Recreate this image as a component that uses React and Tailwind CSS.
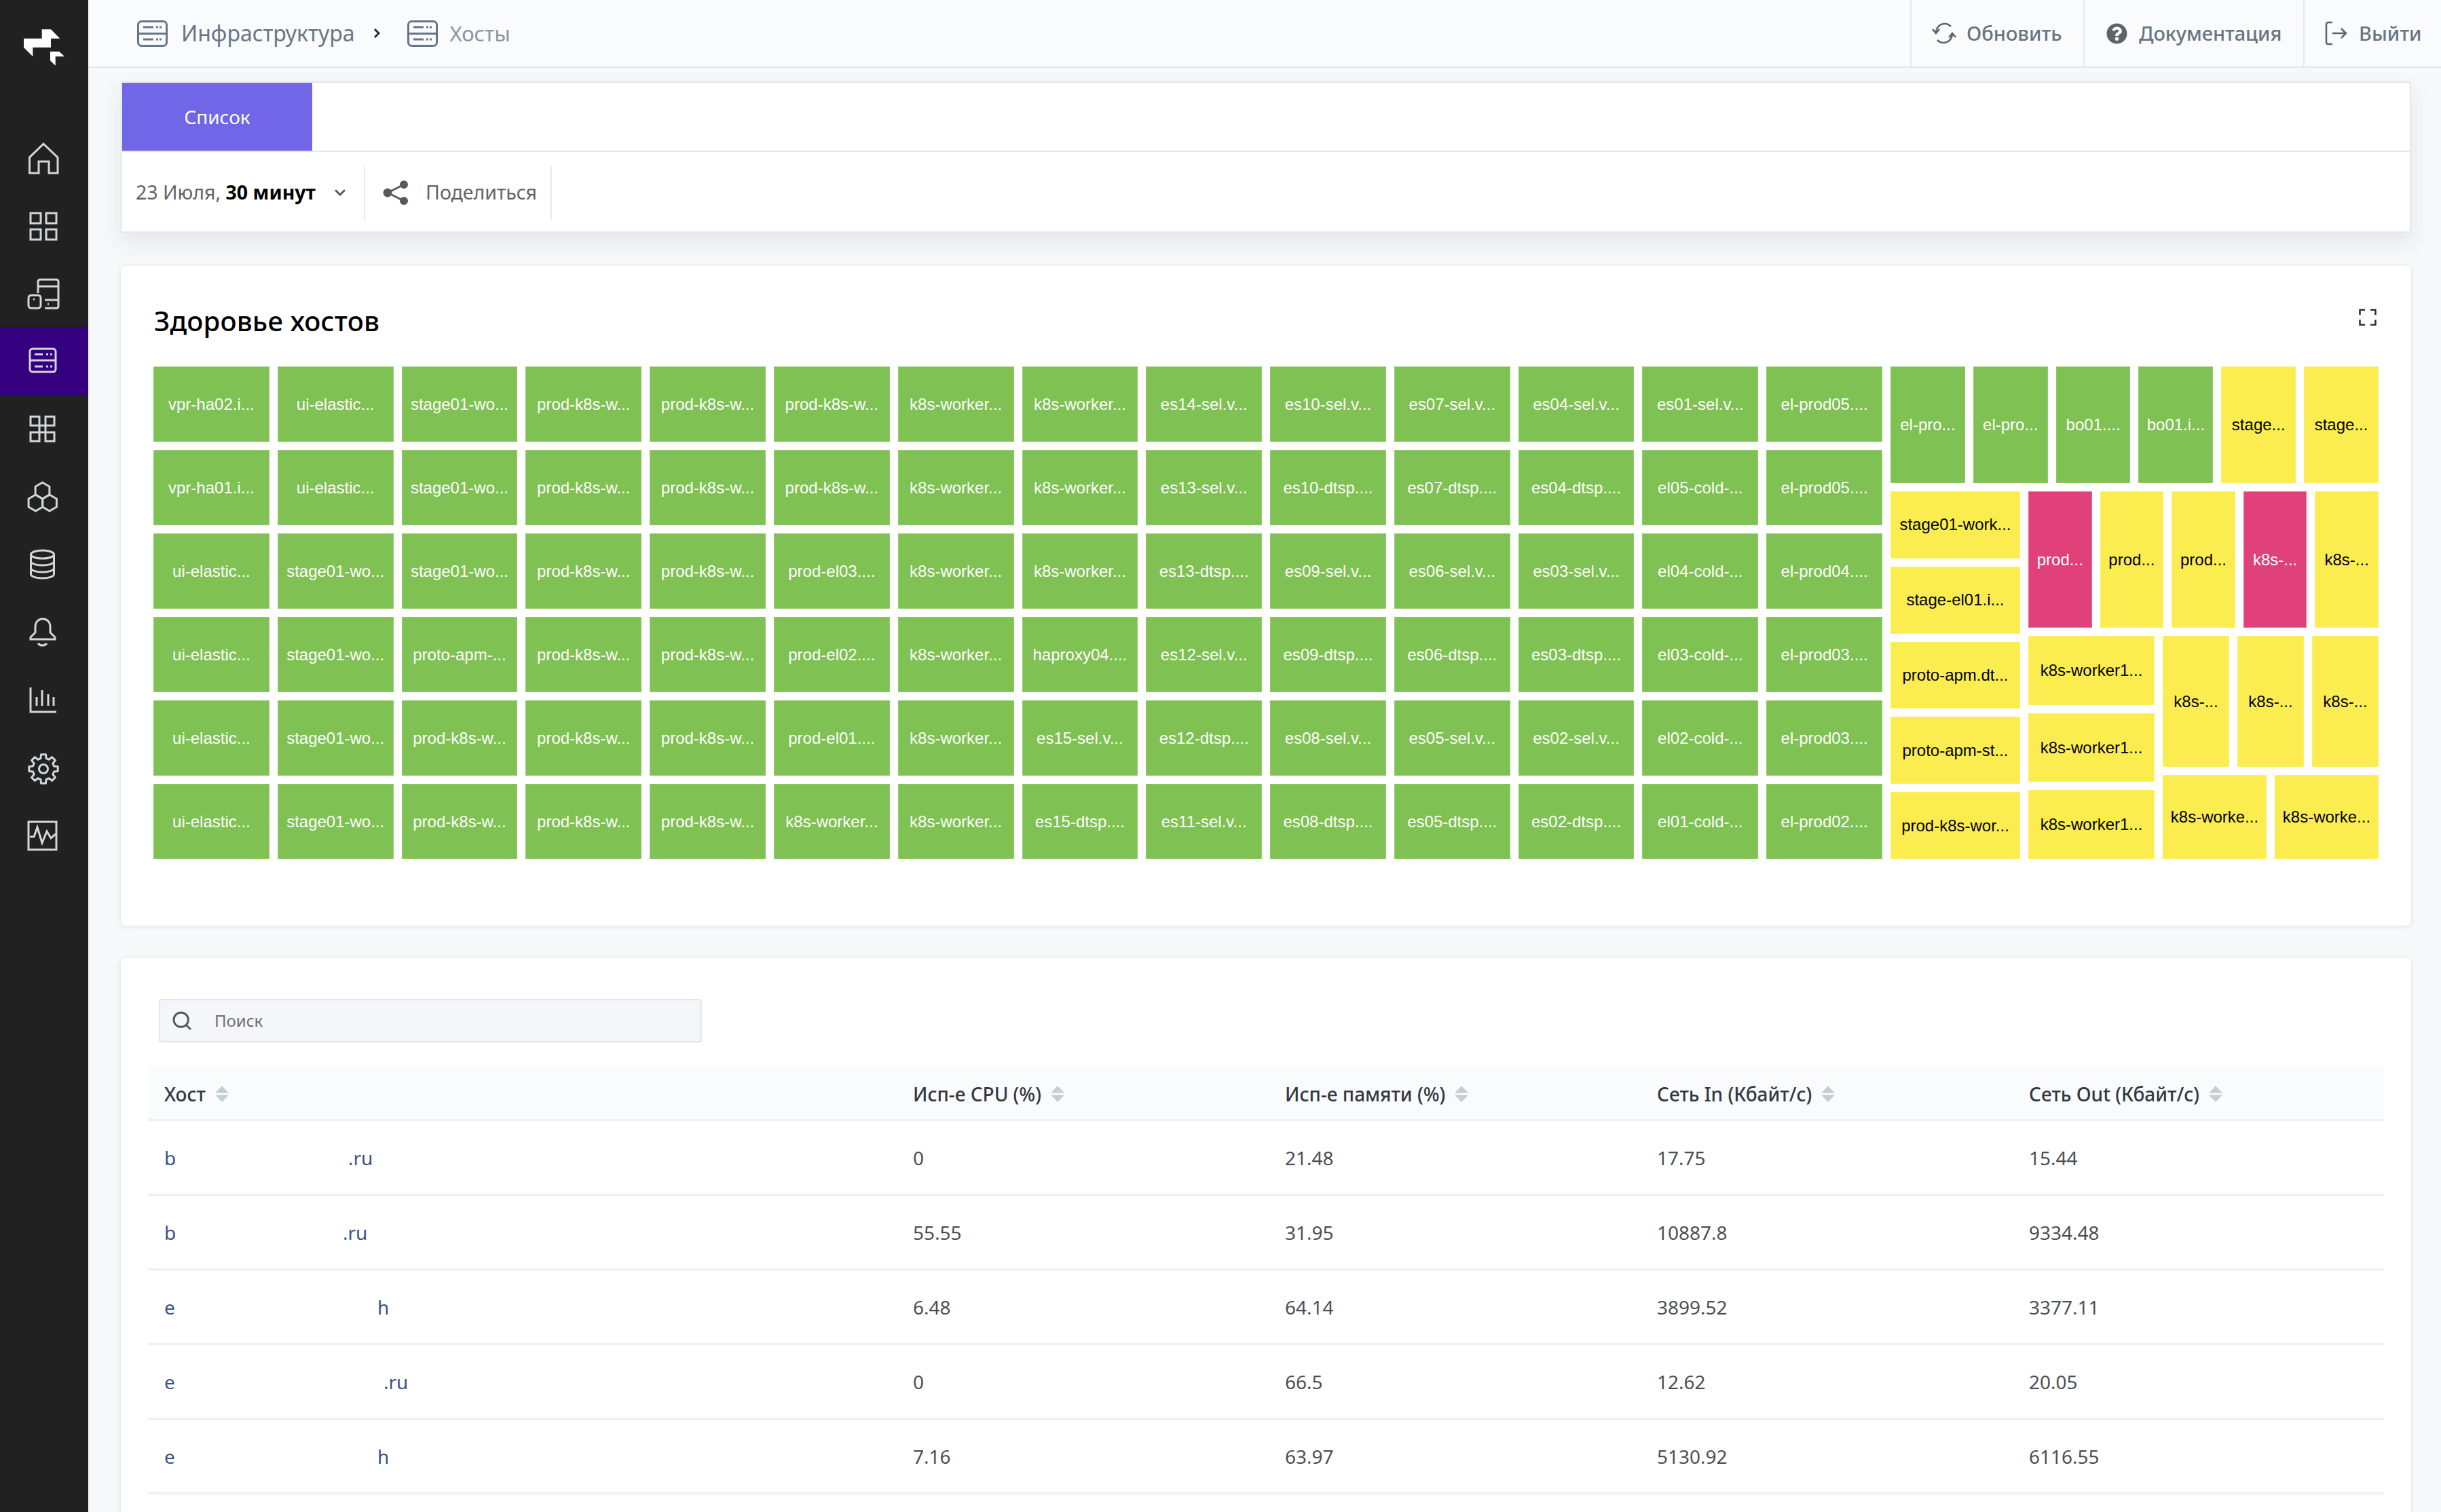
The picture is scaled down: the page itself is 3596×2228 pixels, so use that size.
import React from "react";
import { FaQuestionCircle } from "react-icons/fa";
import { ChevronDown, Search } from "lucide-react";

const gearPath = (() => {
  let d = "";
  for (let i = 0; i < 8; i++) {
    const a = (i * Math.PI) / 4;
    [[a - 0.26, 16], [a - 0.16, 21.5], [a + 0.16, 21.5], [a + 0.26, 16]].forEach(([t, r]) => {
      d += `${d ? "L" : "M"}${(29 + r * Math.sin(t)).toFixed(1)} ${(31 - r * Math.cos(t)).toFixed(1)} `;
    });
  }
  return d + "Z";
})();

const NavSvg = ({ children }) => (
  <svg viewBox="0 0 60 60" className="h-[60px] w-[60px] fill-none stroke-[#d3d5d7] stroke-[3]">
    {children}
  </svg>
);

const navIcons = [
  <path d="M29 10 L8.5 30 V53 H22 V36 H37 V53 H50 V30 Z" />,
  <>
    <rect x="10" y="12" width="15" height="15" />
    <rect x="33" y="12" width="15" height="15" />
    <rect x="10" y="36" width="15" height="15" />
    <rect x="33" y="36" width="15" height="15" />
  </>,
  <>
    <path d="M21 30 V13 Q21 10 24 10 H48 Q51 10 51 13 V49 Q51 52 48 52 H31 M21 20 H51 M31 40 H51 M35 46 H37" />
    <rect x="7" y="33" width="18" height="19" rx="4" />
    <path d="M14 39 H16" />
  </>,
  <>
    <rect x="9" y="12" width="38" height="34" rx="4" />
    <path d="M9 29 H47 M16 20 H28 M33 20 H36 M39 20 H42 M16 38 H28 M33 38 H36 M39 38 H42" />
  </>,
  <>
    <rect x="10" y="12" width="13" height="13" />
    <rect x="32" y="12" width="13" height="13" />
    <rect x="10" y="35" width="13" height="13" />
    <rect x="32" y="35" width="13" height="13" />
    <rect x="23" y="25" width="9" height="10" />
  </>,
  <>
    <path d="M27.5 9 L37.9 15 V27 L27.5 33 L17.1 27 V15 Z" />
    <path d="M17.5 27 L27.9 33 V45 L17.5 51 L7.1 45 V33 Z" />
    <path d="M38 27 L48.4 33 V45 L38 51 L27.6 45 V33 Z" />
  </>,
  <>
    <ellipse cx="27.5" cy="15" rx="17" ry="6" />
    <path d="M10.5 15 V44 C10.5 47.5 18 50 27.5 50 S44.5 47.5 44.5 44 V15" />
    <path d="M10.5 25 C10.5 28.5 18 31 27.5 31 S44.5 28.5 44.5 25" />
    <path d="M10.5 35 C10.5 38.5 18 41 27.5 41 S44.5 38.5 44.5 35" />
  </>,
  <>
    <path d="M10 40 V37 L17 30 V22 C17 14 22 10 28 10 S39 14 39 22 V30 L46 37 V40 Z" />
    <path d="M21 46 C24 50 31 50 34 46" />
  </>,
  <path d="M10 11 V47 H48 M19 25 V38 M27 15 V38 M36 21 V38 M44 25 V38" />,
  <>
    <path d={gearPath} strokeLinejoin="round" />
    <circle cx="29" cy="31" r="6.5" />
  </>,
  <>
    <rect x="7" y="9" width="41" height="41" />
    <path d="M9 31 H15 L20 17 L27 40 L34 23 L40 33 L47 27" />
  </>,
];

const Sidebar = () => (
  <aside className="w-[130px] shrink-0 bg-[#212121]">
    <div className="flex h-[182px] justify-center pt-[43px]">
      <svg viewBox="0 0 60 54" className="h-[54px] w-[60px] fill-white">
        <path d="M0 13.7 H26.7 V0.3 H40 L53.3 13.7 H40 V27 H13.3 V40.3 L0 27 Z" />
        <path d="M39 33 H52.3 L60 40.3 H46.7 V53.7 L39 46.3 Z" />
      </svg>
    </div>
    {navIcons.map((icon, i) => (
      <div key={i} className={`flex h-[100px] items-center justify-center ${i === 3 ? "bg-[#340080]" : ""}`}>
        <NavSvg>{icon}</NavSvg>
      </div>
    ))}
  </aside>
);

const ServerIcon = () => (
  <svg viewBox="0 0 45 39" className="h-[39px] w-[45px] shrink-0 fill-none stroke-[#667587] stroke-[3]">
    <rect x="1.5" y="1.5" width="42" height="36" rx="5" />
    <path d="M1.5 19.5 H43.5 M9 10 H24 M28 10 H31 M33 10 H36 M9 28 H24 M28 28 H31 M33 28 H36" />
  </svg>
);

const Header = () => (
  <header className="flex h-[100px] shrink-0 items-stretch border-b-2 border-[#e3e7ec] bg-[#fafbfd] pl-[72px] font-['Noto_Sans',sans-serif]">
    <div className="flex items-center">
      <ServerIcon />
      <span className="ml-[20px] text-[32px] text-[#697684]">Инфраструктура</span>
      <svg viewBox="0 0 10 16" className="ml-[27px] h-[16px] w-[10px] fill-none stroke-[#26292e] stroke-[3]">
        <path d="M2 2 L8 8 L2 14" />
      </svg>
      <div className="ml-[40px]">
        <ServerIcon />
      </div>
      <span className="ml-[18px] text-[31px] text-[#8b95a1]">Хосты</span>
    </div>
    <div className="ml-auto flex items-stretch text-[29px] font-medium text-[#68747f]">
      <div className="flex w-[255px] items-center border-l-2 border-[#e6e9ee] pl-[30px]">
        <svg viewBox="0 0 36 36" className="h-[36px] w-[36px] fill-none stroke-[#5f6469] stroke-[2.5]">
          <path d="M6 16 C7 9 12 4 19 4 C23 4 26 6 28 8 M30 20 C29 27 24 32 17 32 C13 32 10 30 8 28" />
          <path d="M1 12 L6 18 L11 12 M25 24 L30 18 L35 24" />
        </svg>
        <span className="ml-[15px]">Обновить</span>
      </div>
      <div className="flex w-[324px] items-center border-l-2 border-[#e6e9ee] pl-[32px]">
        <FaQuestionCircle className="h-[31px] w-[31px] text-[#5f6469]" />
        <span className="ml-[17px] tracking-[-0.1px]">Документация</span>
      </div>
      <div className="flex w-[203px] items-center border-l-2 border-[#e6e9ee] pl-[30px]">
        <svg viewBox="0 0 34 36" className="h-[36px] w-[34px] fill-none stroke-[#5f6469] stroke-[2.5]">
          <path d="M11 2 H5 Q2 2 2 5 V31 Q2 34 5 34 H11 M11 18 H31 M24 11 L31 18 L24 25" />
        </svg>
        <span className="ml-[16px]">Выйти</span>
      </div>
    </div>
  </header>
);

const TabsCard = () => (
  <section className="mt-[20px] h-[223px] border-2 border-[#e3e7ec] bg-white font-['Noto_Sans',sans-serif] shadow-[0_14px_30px_rgba(40,50,70,0.09)]">
    <div className="h-[102px] border-b-2 border-[#e3e7ec]">
      <div className="flex h-[100px] w-[280px] items-center justify-center bg-[#7166e8] text-[28px] text-white">Список</div>
    </div>
    <div className="flex h-[119px] items-center">
      <div className="flex h-[80px] w-[358px] items-center border-r-2 border-[#e6e9ee] pl-[20px] text-[28.5px] text-[#5f6369]">
        <span className="whitespace-pre">23 Июля, </span>
        <span className="font-bold text-black">30 минут</span>
        <ChevronDown className="ml-[24px] h-[24px] w-[24px] text-[#55595f]" strokeWidth={3} />
      </div>
      <div className="flex h-[80px] w-[275px] items-center border-r-2 border-[#e6e9ee] pl-[26px] text-[28.5px] text-[#5f6369]">
        <svg viewBox="0 0 38 36" className="h-[36px] w-[38px] fill-[#55595f] stroke-[#55595f] stroke-[3]">
          <path d="M7 18 L31 6 M7 18 L31 30" />
          <circle cx="7" cy="18" r="5" />
          <circle cx="31" cy="6" r="4.5" />
          <circle cx="31" cy="30" r="4.5" />
        </svg>
        <span className="ml-[25px]">Поделиться</span>
      </div>
    </div>
  </section>
);

const cellKinds = {
  g: "bg-[#7fc153] text-white border-[#93cb6d]",
  y: "bg-[#fbec50] text-black border-[#fcf070]",
  p: "bg-[#e14179] text-white border-[#e96a97]",
};

const Cell = ({ kind = "g", className = "", children }) => (
  <div className={`flex items-center justify-center overflow-hidden whitespace-nowrap border text-[24px] ${cellKinds[kind]} ${className}`}>
    {children}
  </div>
);

const gridHosts = [
  "vpr-ha02.i...", "vpr-ha01.i...", "ui-elastic...", "ui-elastic...", "ui-elastic...", "ui-elastic...",
  "ui-elastic...", "ui-elastic...", "stage01-wo...", "stage01-wo...", "stage01-wo...", "stage01-wo...",
  "stage01-wo...", "stage01-wo...", "stage01-wo...", "proto-apm-...", "prod-k8s-w...", "prod-k8s-w...",
  "prod-k8s-w...", "prod-k8s-w...", "prod-k8s-w...", "prod-k8s-w...", "prod-k8s-w...", "prod-k8s-w...",
  "prod-k8s-w...", "prod-k8s-w...", "prod-k8s-w...", "prod-k8s-w...", "prod-k8s-w...", "prod-k8s-w...",
  "prod-k8s-w...", "prod-k8s-w...", "prod-el03....", "prod-el02....", "prod-el01....", "k8s-worker...",
  "k8s-worker...", "k8s-worker...", "k8s-worker...", "k8s-worker...", "k8s-worker...", "k8s-worker...",
  "k8s-worker...", "k8s-worker...", "k8s-worker...", "haproxy04....", "es15-sel.v...", "es15-dtsp....",
  "es14-sel.v...", "es13-sel.v...", "es13-dtsp....", "es12-sel.v...", "es12-dtsp....", "es11-sel.v...",
  "es10-sel.v...", "es10-dtsp....", "es09-sel.v...", "es09-dtsp....", "es08-sel.v...", "es08-dtsp....",
  "es07-sel.v...", "es07-dtsp....", "es06-sel.v...", "es06-dtsp....", "es05-sel.v...", "es05-dtsp....",
  "es04-sel.v...", "es04-dtsp....", "es03-sel.v...", "es03-dtsp....", "es02-sel.v...", "es02-dtsp....",
  "es01-sel.v...", "el05-cold-...", "el04-cold-...", "el03-cold-...", "el02-cold-...", "el01-cold-...",
  "el-prod05....", "el-prod05....", "el-prod04....", "el-prod03....", "el-prod03....", "el-prod02....",
];

const Treemap = () => (
  <div className="flex gap-3 font-['Liberation_Sans',sans-serif]">
    <div className="grid w-[2547px] shrink-0 grid-flow-col grid-cols-[repeat(14,minmax(0,1fr))] grid-rows-[repeat(6,111px)] gap-3">
      {gridHosts.map((h, i) => (
        <Cell key={i}>{h}</Cell>
      ))}
    </div>
    <div className="flex w-[719px] shrink-0 flex-col gap-3">
      <div className="flex h-[172px] gap-3">
        {["el-pro...", "el-pro...", "bo01....", "bo01.i..."].map((h, i) => (
          <Cell key={i} className="flex-1">{h}</Cell>
        ))}
        <Cell kind="y" className="flex-1">stage...</Cell>
        <Cell kind="y" className="flex-1">stage...</Cell>
      </div>
      <div className="flex h-[542px] gap-3">
        <div className="flex w-[191px] flex-col gap-3">
          {["stage01-work...", "stage-el01.i...", "proto-apm.dt...", "proto-apm-st...", "prod-k8s-wor..."].map((h, i) => (
            <Cell key={i} kind="y" className="flex-1">{h}</Cell>
          ))}
        </div>
        <div className="flex w-[516px] flex-col gap-3">
          <div className="flex h-[201px] gap-3">
            <Cell kind="p" className="flex-1">prod...</Cell>
            <Cell kind="y" className="flex-1">prod...</Cell>
            <Cell kind="y" className="flex-1">prod...</Cell>
            <Cell kind="p" className="flex-1">k8s-...</Cell>
            <Cell kind="y" className="flex-1">k8s-...</Cell>
          </div>
          <div className="flex h-[329px] gap-3">
            <div className="flex w-[186px] flex-col gap-3">
              <Cell kind="y" className="flex-1">k8s-worker1...</Cell>
              <Cell kind="y" className="flex-1">k8s-worker1...</Cell>
              <Cell kind="y" className="flex-1">k8s-worker1...</Cell>
            </div>
            <div className="flex w-[318px] flex-col gap-3">
              <div className="flex h-[193px] gap-3">
                <Cell kind="y" className="flex-1">k8s-...</Cell>
                <Cell kind="y" className="flex-1">k8s-...</Cell>
                <Cell kind="y" className="flex-1">k8s-...</Cell>
              </div>
              <div className="flex h-[124px] gap-3">
                <Cell kind="y" className="flex-1">k8s-worke...</Cell>
                <Cell kind="y" className="flex-1">k8s-worke...</Cell>
              </div>
            </div>
          </div>
        </div>
      </div>
    </div>
  </div>
);

const HealthCard = () => (
  <section className="mt-[49px] h-[972px] rounded-lg bg-white pl-[48px] pr-[47px] pt-[56px] shadow-[0_1px_6px_rgba(40,50,70,0.12)]">
    <div className="mb-[42px] flex h-[50px] items-center justify-between">
      <h2 className="pl-[1px] font-['Noto_Sans',sans-serif] text-[40px] font-medium leading-[50px] tracking-[0.2px] text-black">Здоровье хостов</h2>
      <svg viewBox="0 0 26 25" className="mb-[11px] mr-[4px] h-[25px] w-[26px] fill-none stroke-[#2b2e33] stroke-[2.5]">
        <path d="M1.5 9 V1.5 H9 M17 1.5 H24.5 V9 M24.5 16 V23.5 H17 M9 23.5 H1.5 V16" />
      </svg>
    </div>
    <Treemap />
  </section>
);

const SortIcon = () => (
  <svg viewBox="0 0 20 24" className="ml-[14px] h-[24px] w-[20px] fill-[#c8ccd3]">
    <path d="M10 0 L20 10.5 H0 Z M10 24 L0 13.5 H20 Z" />
  </svg>
);

const columns = ["Хост", "Исп-е CPU (%)", "Исп-е памяти (%)", "Сеть In (Кбайт/с)", "Сеть Out (Кбайт/с)"];

const rows = [
  { head: "b", pad: "w-[271px]", tail: ".ru", vals: ["0", "21.48", "17.75", "15.44"] },
  { head: "b", pad: "w-[263px]", tail: ".ru", vals: ["55.55", "31.95", "10887.8", "9334.48"] },
  { head: "e", pad: "w-[314px]", tail: "h", vals: ["6.48", "64.14", "3899.52", "3377.11"] },
  { head: "e", pad: "w-[323px]", tail: ".ru", vals: ["0", "66.5", "12.62", "20.05"] },
  { head: "e", pad: "w-[314px]", tail: "h", vals: ["7.16", "63.97", "5130.92", "6116.55"] },
];

const gridCols = "grid grid-cols-[1103px_548px_548px_548px_547px]";

const HostsTable = () => (
  <section className="mt-[47px] h-[900px] rounded-lg bg-white pl-[40px] pr-[40px] pt-[61px] font-['Noto_Sans',sans-serif] shadow-[0_1px_6px_rgba(40,50,70,0.12)]">
    <div className="ml-[16px] flex h-[64px] w-[800px] items-center rounded border-2 border-[#e2e5ea] bg-[#f5f6f9] pl-[16px]">
      <Search className="h-[32px] w-[32px] text-[#55595f]" strokeWidth={2.2} />
      <span className="ml-[32px] text-[24px] text-[#6b6f75]">Поиск</span>
    </div>
    <div className={`${gridCols} mt-[35px] h-[81px] border-b-[3px] border-[#eeeff4] bg-[#fafbfd] pt-[3px] text-[28px] font-medium text-[#33383f]`}>
      {columns.map((c) => (
        <div key={c} className="flex items-center pl-[24px]">
          {c}
          <SortIcon />
        </div>
      ))}
    </div>
    {rows.map((r, i) => (
      <div key={i} className={`${gridCols} h-[110px] border-b-[3px] border-[#eeeff4] pt-[1px] text-[28px] text-[#4b4f55]`}>
        <div className="flex items-center pl-[24px] text-[#3d5288]">
          <span className={r.pad}>{r.head}</span>
          <span>{r.tail}</span>
        </div>
        {r.vals.map((v, j) => (
          <div key={j} className="flex items-center pl-[24px]">{v}</div>
        ))}
      </div>
    ))}
  </section>
);

export default function App() {
  return (
    <div className="flex h-[2228px] w-[3596px] overflow-hidden bg-[#f7f8fa]">
      <Sidebar />
      <main className="flex min-w-0 flex-1 flex-col">
        <Header />
        <div className="pl-[48px] pr-[44px]">
          <TabsCard />
          <HealthCard />
          <HostsTable />
        </div>
      </main>
    </div>
  );
}
